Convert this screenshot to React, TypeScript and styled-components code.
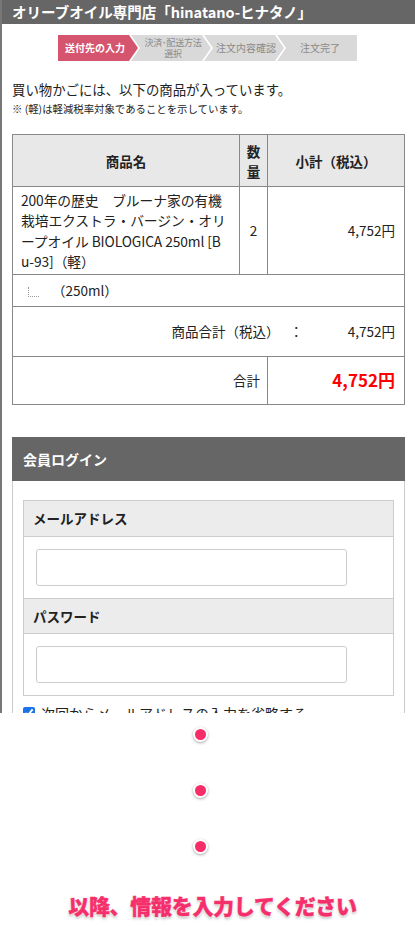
import styled, { createGlobalStyle, css } from "styled-components";

const GlobalStyle = createGlobalStyle`
  html, body {
    margin: 0;
    padding: 0;
    background: #fff;
  }
  body {
    font-family: "Noto Sans CJK JP", "Noto Sans", "Liberation Sans", sans-serif;
    color: #222;
  }
  * {
    box-sizing: border-box;
  }
`;

const Page = styled.div`
  width: 415px;
  height: 926px;
  overflow: hidden;
`;

const Shot = styled.div`
  height: 713px;
  overflow: hidden;
  border-left: 2px solid #777;
`;

const TopBar = styled.header`
  height: 24px;
  background: #666;
  color: #fff;
  font-size: 14.5px;
  font-weight: 700;
  line-height: 24px;
  padding-left: 10px;
  white-space: nowrap;
`;

const Steps = styled.ol`
  display: flex;
  width: 301px;
  height: 26px;
  margin: 11px auto 0;
  padding: 0;
  list-style: none;
`;

const Step = styled.li<{ $active?: boolean; $compact?: boolean; $pos: "first" | "mid" | "last" }>`
  width: 80px;
  height: 26px;
  display: flex;
  align-items: center;
  justify-content: center;
  text-align: center;
  font-size: ${({ $compact }) => ($compact ? "9px" : "10px")};
  letter-spacing: ${({ $compact }) => ($compact ? "-0.2px" : "0")};
  line-height: 11.5px;
  white-space: nowrap;
  background: ${({ $active }) => ($active ? "#d5556f" : "#d9d9d9")};
  color: ${({ $active }) => ($active ? "#fff" : "#8a8a8a")};
  font-weight: ${({ $active }) => ($active ? 700 : 400)};
  ${({ $pos }) =>
    $pos === "first"
      ? css`
          clip-path: polygon(0 0, calc(100% - 9px) 0, 100% 50%, calc(100% - 9px) 100%, 0 100%);
          padding-right: 6px;
        `
      : $pos === "mid"
      ? css`
          margin-left: -7px;
          clip-path: polygon(0 0, calc(100% - 9px) 0, 100% 50%, calc(100% - 9px) 100%, 0 100%, 9px 50%);
          padding-left: 4px;
        `
      : css`
          margin-left: -7px;
          clip-path: polygon(0 0, 100% 0, 100% 100%, 0 100%, 9px 50%);
          padding-left: 6px;
        `}
`;

const Content = styled.div`
  padding: 0 10px;
`;

const Lead = styled.p`
  margin: 18px 0 0;
  font-size: 13.4px;
  line-height: 20px;
`;

const Note = styled.p`
  margin: 2px 0 0;
  font-size: 10.4px;
  line-height: 16px;
`;

const CartTable = styled.table`
  width: 393px;
  margin-top: 17px;
  border-collapse: collapse;
  table-layout: fixed;
  font-size: 13.5px;
`;

const Th = styled.th<{ $w?: number }>`
  width: ${({ $w }) => ($w ? `${$w}px` : "auto")};
  height: 52px;
  background: #e8e8e8;
  border: 1px solid #888;
  font-weight: 700;
  line-height: 20px;
  padding: 0 4px;
`;

const Td = styled.td<{ $align?: "left" | "center" | "right"; $h: number }>`
  height: ${({ $h }) => `${$h}px`};
  border: 1px solid #888;
  text-align: ${({ $align }) => $align ?? "left"};
  vertical-align: middle;
  padding: 0 9px 0 8px;
  line-height: 20.5px;
`;

const ProductName = styled.div`
  white-space: nowrap;
  font-size: 13.8px;
  letter-spacing: -0.1px;
`;

const OptionLine = styled.div`
  display: flex;
  align-items: center;
  padding-left: 7px;
`;

const TreeMark = styled.span`
  width: 11px;
  height: 10px;
  border-left: 1px dotted #999;
  border-bottom: 1px dotted #999;
  margin-right: 13px;
  margin-top: 3px;
`;

const SumLine = styled.div`
  display: flex;
  justify-content: flex-end;
  align-items: center;
`;

const Colon = styled.span`
  margin: 0 4px 0 10px;
`;

const SumValue = styled.span`
  display: inline-block;
  width: 88px;
  text-align: right;
`;

const TotalPrice = styled.span`
  color: #ff0000;
  font-weight: 700;
  font-size: 17px;
`;

const LoginPanel = styled.section`
  margin-top: 32px;
  border: 1px solid #ccc;
  border-top: none;
`;

const PanelHead = styled.h2`
  margin: 0 -1px;
  height: 44px;
  background: #666;
  color: #fff;
  font-size: 14px;
  font-weight: 700;
  line-height: 44px;
  padding-left: 11px;
`;

const PanelBody = styled.div`
  padding: 19px 10px 0;
`;

const FieldTable = styled.div`
  border: 1px solid #ccc;
`;

const FieldLabel = styled.div<{ $top?: boolean }>`
  height: 36px;
  background: #ececec;
  border-top: ${({ $top }) => ($top ? "none" : "1px solid #ccc")};
  border-bottom: 1px solid #ccc;
  padding-left: 9px;
  font-size: 13.5px;
  font-weight: 700;
  line-height: 35px;
`;

const FieldBody = styled.div`
  padding: 12px 12px 12px;
`;

const TextInput = styled.input`
  display: block;
  width: 311px;
  height: 37px;
  border: 1px solid #ccc;
  border-radius: 3px;
  background: #fff;
`;

const Remember = styled.label`
  display: flex;
  align-items: center;
  gap: 6px;
  margin-top: 7px;
  font-size: 14px;
  line-height: 20px;
`;

const Check = styled.input`
  margin: 0;
  width: 12px;
  height: 12px;
  accent-color: #1a73e8;
`;

const Continuation = styled.div`
  display: flex;
  flex-direction: column;
  align-items: center;
  padding-top: 14px;
`;

const Dot = styled.span`
  width: 15px;
  height: 15px;
  border-radius: 50%;
  background: #f72d68;
  border: 2.5px solid #fff;
  box-shadow: 0 1px 3px rgba(0, 0, 0, 0.35);
  margin: 0 14px 41px 0;
`;

const Message = styled.p`
  margin: -4px 0 0 10px;
  font-size: 21px;
  line-height: 28px;
  font-weight: 900;
  letter-spacing: -0.3px;
  color: #f52f6b;
  -webkit-text-stroke: 0.4px #f52f6b;
  text-shadow: 0 0 2px #fff, 0 0 3px #fff, 0 2px 3px rgba(0, 0, 0, 0.3);
  white-space: nowrap;
`;

export default function App() {
  return (
    <Page>
      <GlobalStyle />
      <Shot>
        <TopBar>オリーブオイル専門店「hinatano-ヒナタノ」</TopBar>
        <Steps>
          <Step $active $pos="first">送付先の入力</Step>
          <Step $pos="mid" $compact>
            決済･配送方法
            <br />
            選択
          </Step>
          <Step $pos="mid">注文内容確認</Step>
          <Step $pos="last">注文完了</Step>
        </Steps>
        <Content>
          <Lead>買い物かごには、以下の商品が入っています。</Lead>
          <Note>※ (軽)は軽減税率対象であることを示しています。</Note>
          <CartTable>
            <thead>
              <tr>
                <Th $w={227}>商品名</Th>
                <Th $w={28}>
                  数<br />量
                </Th>
                <Th>小計（税込）</Th>
              </tr>
            </thead>
            <tbody>
              <tr>
                <Td $h={88}>
                  <ProductName>
                    200年の歴史　ブルーナ家の有機
                    <br />
                    栽培エクストラ・バージン・オリ
                    <br />
                    ープオイル BIOLOGICA 250ml [B
                    <br />
                    u-93]（軽）
                  </ProductName>
                </Td>
                <Td $h={88} $align="center" style={{ padding: 0 }}>
                  2
                </Td>
                <Td $h={88} $align="right">
                  4,752円
                </Td>
              </tr>
              <tr>
                <Td $h={32} colSpan={3}>
                  <OptionLine>
                    <TreeMark />
                    （250ml）
                  </OptionLine>
                </Td>
              </tr>
              <tr>
                <Td $h={50} colSpan={3}>
                  <SumLine>
                    商品合計（税込）
                    <Colon>：</Colon>
                    <SumValue>4,752円</SumValue>
                  </SumLine>
                </Td>
              </tr>
              <tr>
                <Td $h={48} colSpan={2} $align="right" style={{ paddingRight: 7 }}>
                  合計
                </Td>
                <Td $h={48} $align="right">
                  <TotalPrice>4,752円</TotalPrice>
                </Td>
              </tr>
            </tbody>
          </CartTable>
          <LoginPanel>
            <PanelHead>会員ログイン</PanelHead>
            <PanelBody>
              <FieldTable>
                <FieldLabel $top>メールアドレス</FieldLabel>
                <FieldBody>
                  <TextInput type="email" />
                </FieldBody>
                <FieldLabel>パスワード</FieldLabel>
                <FieldBody>
                  <TextInput type="password" />
                </FieldBody>
              </FieldTable>
              <Remember>
                <Check type="checkbox" defaultChecked />
                次回からメールアドレスの入力を省略する
              </Remember>
            </PanelBody>
          </LoginPanel>
        </Content>
      </Shot>
      <Continuation>
        <Dot />
        <Dot />
        <Dot />
        <Message>以降、情報を入力してください</Message>
      </Continuation>
    </Page>
  );
}
